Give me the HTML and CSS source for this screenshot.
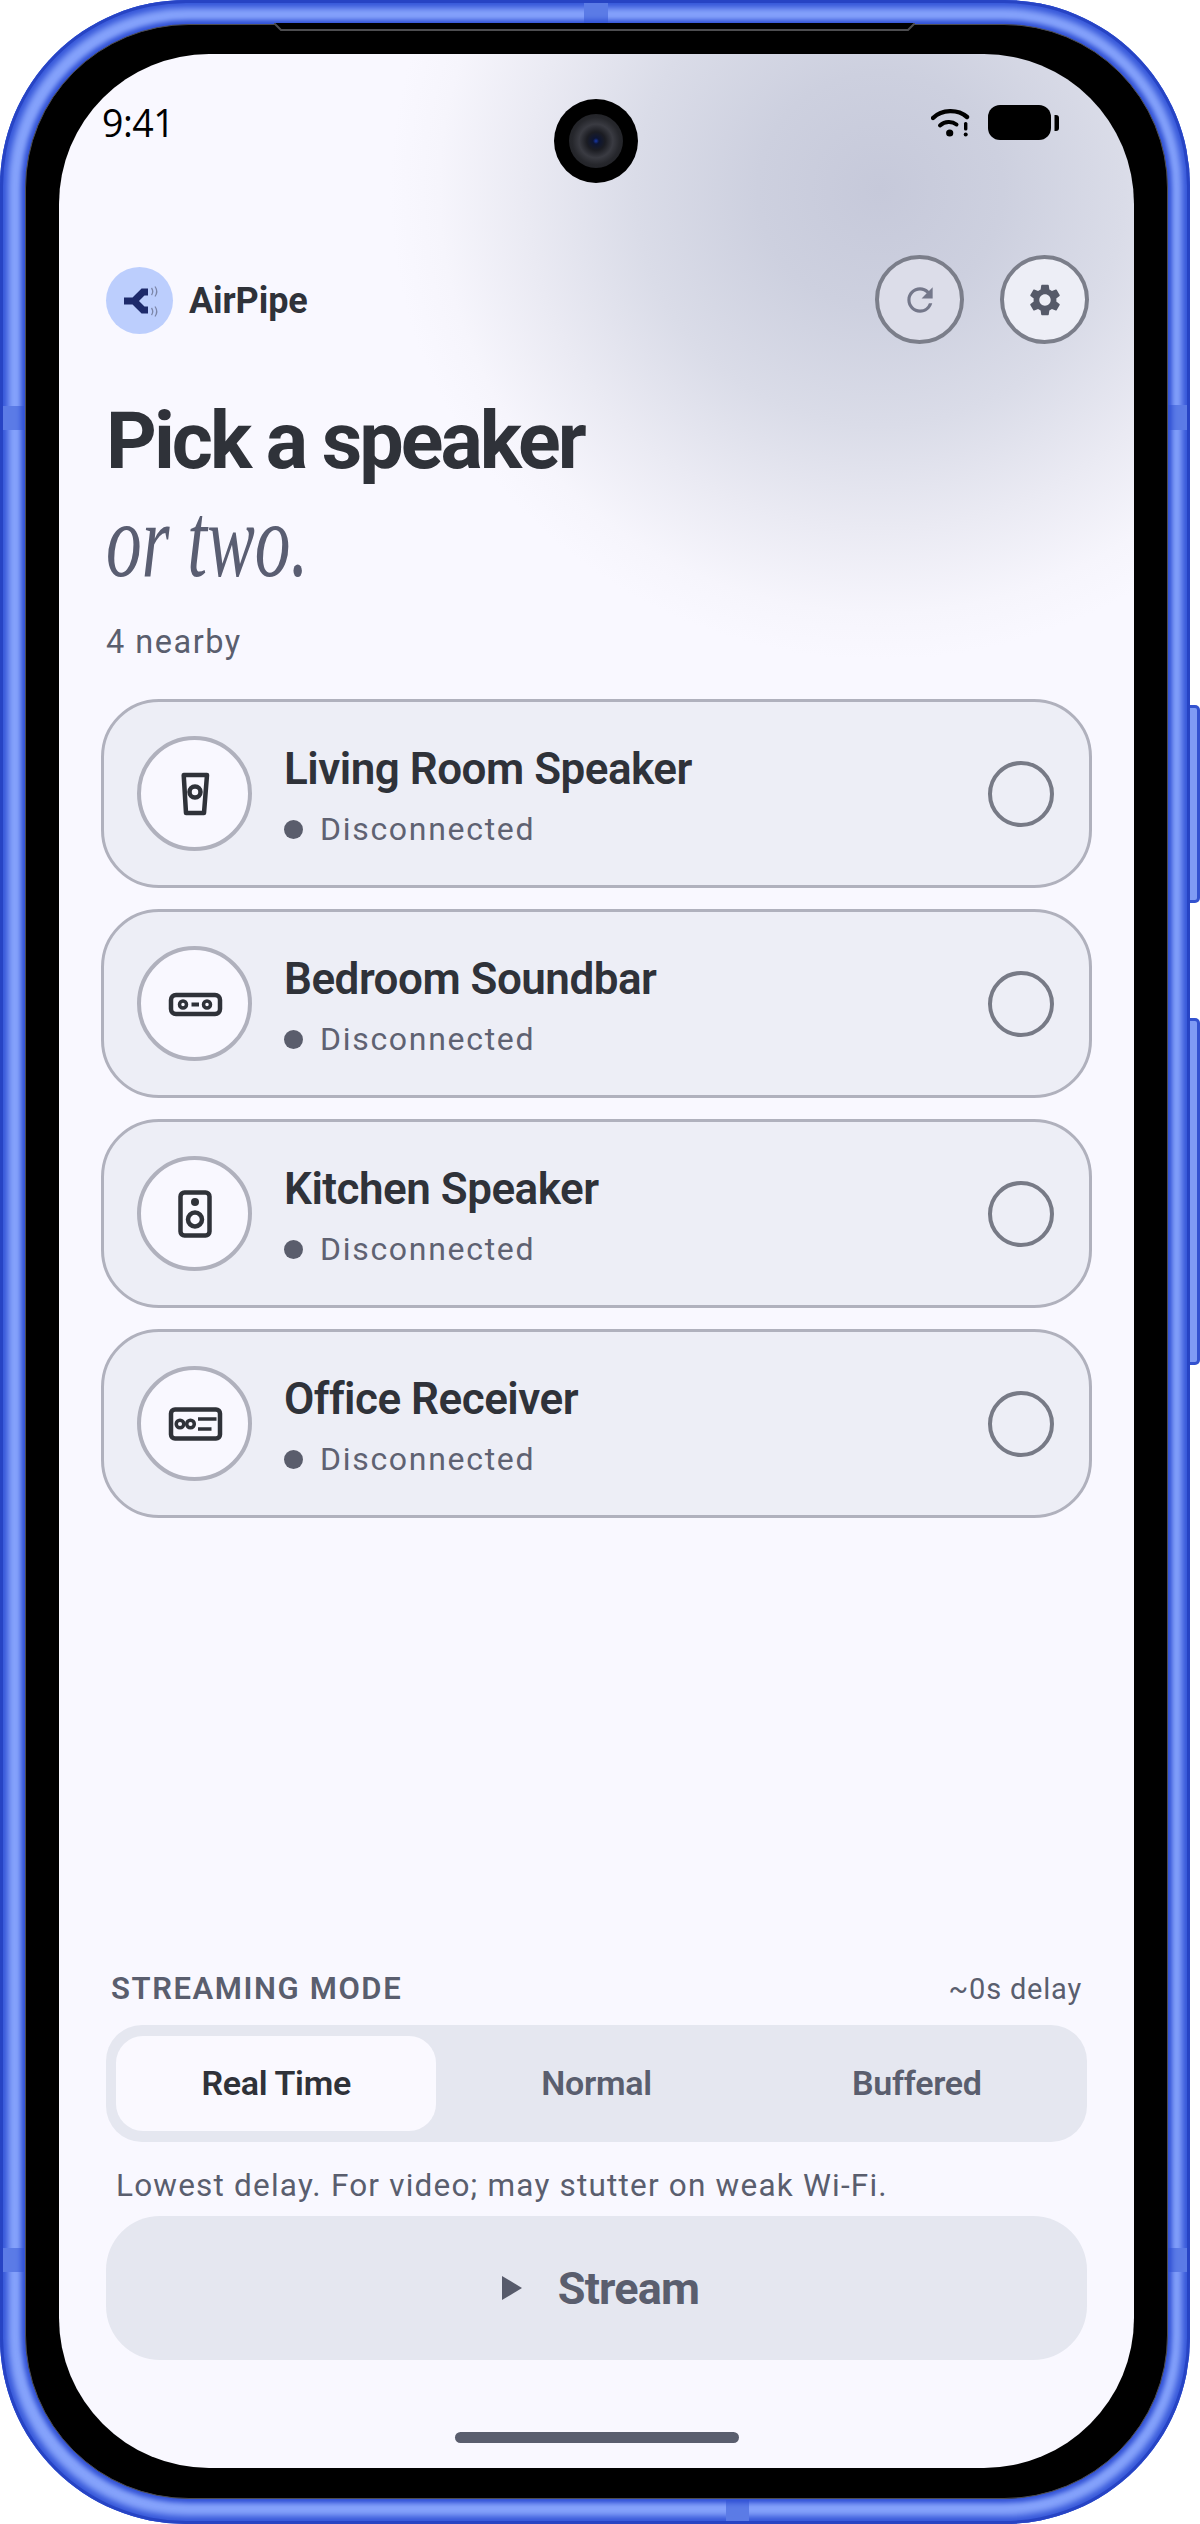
FILE: index.html
```html
<!DOCTYPE html>
<html lang="en">
<head>
<meta charset="utf-8">
<title>AirPipe</title>
<link rel="stylesheet" href="styles.css">
</head>
<body>
<div class="device">
  <span class="side-btn side-btn-a"></span>
  <span class="side-btn side-btn-b"></span>
  <span class="band band-top"></span>
  <span class="band band-bottom"></span>
  <span class="band band-l1"></span>
  <span class="band band-l2"></span>
  <span class="band band-r1"></span>
  <span class="band band-r2"></span>
  <div class="bezel">
    <svg class="notch" width="641" height="10" viewBox="0 0 641 10"><path d="M0 0 L7 7 H634 L641 0 Z" fill="#000"/><path d="M0 0 L7 7 H634 L641 0" fill="none" stroke="#4d4d50" stroke-width="2"/></svg>
    <main class="screen">
      <div class="camera"><span class="lens"></span></div>
      <div class="status">
        <span class="clock">9:41</span>
        <div class="status-icons">
          <svg class="wifi" width="40" height="30" viewBox="0 0 40 30"><path d="M2 10 C11 1 27 1 36 9" fill="none" stroke="#000" stroke-width="4.4" stroke-linecap="round"/><path d="M9 17.5 C14 13 21 13 25.5 16.5" fill="none" stroke="#000" stroke-width="4" stroke-linecap="round"/><circle cx="18.7" cy="25" r="3.6" fill="#000"/><rect x="33" y="14" width="3.4" height="8.5" rx="1.5" fill="#000"/><circle cx="34.7" cy="26.5" r="2" fill="#000"/></svg>
          <svg class="battery" width="71" height="35" viewBox="0 0 71 35"><rect x="0" y="0" width="63" height="35" rx="12" fill="#000"/><path d="M66.5 10 H68 a3 3 0 0 1 3 3 V23 a3 3 0 0 1 -3 3 H66.5 Z" fill="#000"/></svg>
        </div>
      </div>

      <header class="topbar">
        <div class="brand">
          <span class="logo">
            <svg width="67" height="67" viewBox="0 0 67 67">
              <path d="M18 34 H28 L37 25 H42 M28 34 L37 43 H42" fill="none" stroke="#1d2a6b" stroke-width="7"/>
              <path d="M45.5 21 q2.500 3.500 0 7 M49 19.500 q3.500 5 0 10 M45.500 41 q2.500 3.500 0 7 M49 39.500 q3.500 5 0 10" fill="none" stroke="#7c86a8" stroke-width="1.300"/>
            </svg>
          </span>
          <span class="brand-name">AirPipe</span>
        </div>
        <div class="actions">
          <button class="round-btn round-btn-refresh" type="button" aria-label="Refresh">
            <svg width="38" height="38" viewBox="0 0 24 24"><path fill="#74778a" d="M17.650 6.350A7.958 7.958 0 0 0 12 4c-4.420 0-7.990 3.580-7.990 8s3.570 8 7.990 8c3.730 0 6.840-2.550 7.730-6h-2.080A5.990 5.990 0 0 1 12 18c-3.310 0-6-2.690-6-6s2.690-6 6-6c1.660 0 3.140.690 4.220 1.780L13 11h7V4l-2.350 2.350z"/></svg>
          </button>
          <button class="round-btn" type="button" aria-label="Settings">
            <svg width="38" height="38" viewBox="0 0 24 24"><path fill="#565a69" d="M19.140 12.940c.040-.300.060-.610.060-.940 0-.320-.020-.640-.070-.940l2.030-1.580a.490.490 0 0 0 .120-.610l-1.920-3.320a.488.488 0 0 0-.590-.220l-2.390.960c-.500-.380-1.030-.700-1.620-.940l-.360-2.540a.484.484 0 0 0-.480-.410h-3.840c-.240 0-.430.170-.470.410l-.360 2.540c-.590.240-1.130.570-1.620.940l-2.390-.960c-.220-.080-.470 0-.590.220L2.740 8.870c-.120.210-.080.470.120.610l2.030 1.580c-.050.300-.090.630-.090.940s.020.640.070.940l-2.030 1.580a.490.490 0 0 0-.120.610l1.920 3.320c.120.220.370.290.590.220l2.390-.960c.500.380 1.030.700 1.620.940l.360 2.540c.050.240.240.410.480.410h3.840c.240 0 .440-.170.470-.410l.360-2.540c.590-.240 1.130-.560 1.620-.940l2.390.960c.220.080.47 0 .590-.220l1.920-3.320c.120-.220.070-.470-.120-.610l-2.010-1.580zM12 15.600c-1.980 0-3.600-1.620-3.600-3.600s1.620-3.600 3.600-3.600 3.600 1.620 3.600 3.600-1.620 3.600-3.600 3.600z"/></svg>
          </button>
        </div>
      </header>

      <section class="intro">
        <h1 class="title">Pick a speaker</h1>
        <p class="subtitle">or two.</p>
        <p class="count">4 nearby</p>
      </section>

      <section class="list">
        <article class="card">
          <span class="device-icon"><svg width="64" height="64" viewBox="0 0 64 64"><path d="M20.700 13 H44 L41 51 H23 Z" fill="none" stroke="#2f3239" stroke-width="4.500" stroke-linejoin="round"/><circle cx="32" cy="30" r="5.500" fill="none" stroke="#2f3239" stroke-width="4.500"/></svg></span>
          <div class="card-text"><h2 class="card-title">Living Room Speaker</h2><p class="card-status"><span class="dot"></span>Disconnected</p></div>
          <span class="radio"></span>
        </article>
        <article class="card">
          <span class="device-icon"><svg width="64" height="64" viewBox="0 0 64 64"><rect x="8" y="23" width="49" height="19" rx="5" fill="none" stroke="#2f3239" stroke-width="4.500"/><circle cx="20" cy="32.500" r="3.500" fill="none" stroke="#2f3239" stroke-width="3.500"/><circle cx="44" cy="32.500" r="3.500" fill="none" stroke="#2f3239" stroke-width="3.500"/><path d="M28.500 32.500 H36" stroke="#2f3239" stroke-width="4"/></svg></span>
          <div class="card-text"><h2 class="card-title">Bedroom Soundbar</h2><p class="card-status"><span class="dot"></span>Disconnected</p></div>
          <span class="radio"></span>
        </article>
        <article class="card">
          <span class="device-icon"><svg width="64" height="64" viewBox="0 0 64 64"><rect x="17.500" y="10.500" width="29" height="43" rx="4" fill="none" stroke="#2f3239" stroke-width="4.500"/><circle cx="32" cy="20" r="4" fill="#2f3239"/><circle cx="32" cy="37.500" r="7" fill="none" stroke="#2f3239" stroke-width="4.500"/></svg></span>
          <div class="card-text"><h2 class="card-title">Kitchen Speaker</h2><p class="card-status"><span class="dot"></span>Disconnected</p></div>
          <span class="radio"></span>
        </article>
        <article class="card">
          <span class="device-icon"><svg width="64" height="64" viewBox="0 0 64 64"><rect x="8" y="17.500" width="49" height="29" rx="4" fill="none" stroke="#2f3239" stroke-width="4.500"/><circle cx="17" cy="32" r="3.800" fill="none" stroke="#2f3239" stroke-width="3.500"/><circle cx="27.500" cy="32" r="3.800" fill="none" stroke="#2f3239" stroke-width="3.500"/><path d="M35 27 H53.500 M35 37 H48.500" stroke="#2f3239" stroke-width="3.500"/></svg></span>
          <div class="card-text"><h2 class="card-title">Office Receiver</h2><p class="card-status"><span class="dot"></span>Disconnected</p></div>
          <span class="radio"></span>
        </article>
      </section>

      <section class="mode">
        <div class="mode-head"><span class="mode-label">STREAMING MODE</span><span class="mode-delay">~0s delay</span></div>
        <div class="segments">
          <button class="segment segment-on" type="button">Real Time</button>
          <button class="segment" type="button">Normal</button>
          <button class="segment" type="button">Buffered</button>
        </div>
        <p class="mode-desc">Lowest delay. For video; may stutter on weak Wi-Fi.</p>
        <button class="stream" type="button">
          <svg width="20" height="24" viewBox="0 0 20 24"><path d="M0 0 L20 12 L0 24 Z" fill="#575b6b"/></svg>
          <span>Stream</span>
        </button>
      </section>

      <div class="home-wrap"><span class="home-bar"></span></div>
    </main>
  </div>
</div>
</body>
</html>
```

FILE: styles.css
```css
* { box-sizing: border-box; }
html, body { margin: 0; padding: 0; background: #fff; }
body { width: 1200px; height: 2524px; overflow: hidden; font-family: Roboto, "Liberation Sans", sans-serif; color: #2f3239; }
h1, h2, p { margin: 0; font-weight: normal; }
button { font-family: inherit; border: 0; padding: 0; margin: 0; }

.device {
  position: relative;
  width: 1190px;
  height: 2524px;
  padding: 24px 22px 25px 25px;
  border-radius: 186px;
  background: #86a3fb;
  box-shadow: inset 0 0 0 3px #2744c4, inset 0 0 6px 8px #3556d8;
}
.side-btn {
  position: absolute;
  left: 1190px;
  width: 10px;
  background: #7f9bf4;
  border: 3px solid #3352cf;
  border-left: 0;
  border-radius: 0 5px 5px 0;
}
.side-btn-a { top: 705px; height: 198px; }
.side-btn-b { top: 1018px; height: 347px; }

.band { position: absolute; background: #5b7be6; }
.band-top { top: 3px; left: 584px; width: 24px; height: 20px; }
.band-bottom { bottom: 3px; left: 726px; width: 23px; height: 21px; }
.band-l1 { left: 3px; top: 406px; width: 21px; height: 24px; }
.band-l2 { left: 3px; top: 2248px; width: 21px; height: 24px; }
.band-r1 { right: 3px; top: 405px; width: 19px; height: 25px; }
.band-r2 { right: 3px; top: 2248px; width: 19px; height: 24px; }

.bezel {
  position: relative;
  width: 1143px;
  height: 2475px;
  padding: 29px 33px 30px 33px;
  background: #000;
  border: 1.500px solid #4d4d50;
  border-radius: 164px;
  box-shadow: 0 0 5px 4px #2f4fd4;
}
.notch { position: absolute; top: -2px; left: 248px; }

.screen {
  position: relative;
  display: flex;
  flex-direction: column;
  height: 100%;
  padding: 0 42px 25px;
  border-radius: 150px;
  overflow: hidden;
  background:
    radial-gradient(ellipse 490px 470px at 821px 136px,
      #c6c9da 0%, #cdd0df 25%, #dadce8 50%, #eaeaf3 72%, #f6f5fc 90%, #f9f8ff 100%),
    #f9f8ff;
}

.camera {
  position: absolute;
  top: 45px;
  left: 495px;
  width: 84px;
  height: 84px;
  border-radius: 50%;
  background: #000;
  display: flex;
  align-items: center;
  justify-content: center;
}
.lens {
  width: 54px;
  height: 54px;
  border-radius: 50%;
  background: radial-gradient(circle at 50% 50%, #1737a8 0, #0d1533 8%, #1b1c22 24%, #3a3b42 44%, #26272c 62%, #1a1b1f 100%);
}

.status { display: flex; justify-content: space-between; align-items: center; height: 138px; padding: 0 1px; }
.clock { font-family: "Open Sans", sans-serif; font-size: 37.500px; color: #000; line-height: 40px; letter-spacing: -0.500px; margin-top: -1px; }
.status-icons { display: flex; align-items: center; gap: 17px; margin-right: 32px; margin-top: -1px; }
.wifi, .battery { display: block; }

.topbar { display: flex; justify-content: space-between; align-items: center; height: 89px; margin-top: 63px; padding: 0 3px 0 5px; }
.brand { display: flex; align-items: center; gap: 16px; margin-top: 2px; }
.logo { display: block; width: 67px; height: 67px; border-radius: 50%; background: #bccefd; }
.logo svg { display: block; }
.brand-name { font-size: 36px; font-weight: 700; letter-spacing: -0.100px; line-height: 44px; }
.actions { display: flex; gap: 36px; }
.round-btn {
  display: flex;
  align-items: center;
  justify-content: center;
  width: 89px;
  height: 89px;
  border-radius: 50%;
  border: 4.500px solid #7b7e8a;
  background: #edeef6;
}
.round-btn-refresh { background: #dcdde9; }

.intro { padding-left: 5px; }
.title { margin-top: 53px; font-size: 79px; font-weight: 700; line-height: 88px; letter-spacing: -3px; color: #2f3239; }
.subtitle {
  margin-top: 6px;
  font-family: "Liberation Serif", serif;
  font-style: italic;
  font-size: 105px;
  line-height: 100px;
  color: #5a5e72;
  transform: scaleX(0.68);
  transform-origin: left center;
}
.count { margin-top: 31px; font-size: 32.500px; line-height: 40px; letter-spacing: 1.500px; color: #5a5e6e; }

.list { display: flex; flex-direction: column; gap: 21px; margin-top: 37px; }
.card {
  display: flex;
  align-items: center;
  height: 189px;
  padding: 0 35px 0 33px;
  border: 3.500px solid #b0b1bd;
  border-radius: 58px;
  background: #edeef6;
}
.device-icon {
  display: flex;
  align-items: center;
  justify-content: center;
  flex: none;
  width: 115px;
  height: 115px;
  border-radius: 50%;
  border: 4px solid #b0b1bd;
  background: #f9f8ff;
}
.card-text { flex: 1; margin-left: 32px; margin-top: 5px; }
.card-title { font-size: 44px; font-weight: 600; line-height: 56px; letter-spacing: -0.500px; color: #2f3239; }
.card-status { display: flex; align-items: center; gap: 17px; margin-top: 10px; font-size: 32px; line-height: 44px; letter-spacing: 1.700px; color: #5f6272; }
.dot { display: block; flex: none; width: 19px; height: 19px; border-radius: 50%; background: #5a5d6c; }
.radio { flex: none; width: 66px; height: 66px; border-radius: 50%; border: 4px solid #777a86; }

.mode { margin-top: auto; display: flex; flex-direction: column; }
.mode-head { display: flex; justify-content: space-between; align-items: baseline; padding: 0 10px 0 10px; height: 40px; }
.mode-label { font-size: 31px; font-weight: 600; letter-spacing: 1.600px; line-height: 40px; color: #5a5e6e; }
.mode-delay { font-size: 29px; letter-spacing: 0.800px; line-height: 40px; color: #5a5e6e; }
.segments { display: grid; grid-template-columns: repeat(3, 1fr); margin: 16px 5px 0; padding: 11px 10px; height: 117px; border-radius: 36px; background: #e5e7f0; }
.segment { border-radius: 27px; background: transparent; font-size: 34px; font-weight: 600; letter-spacing: -0.300px; color: #5a5e6e; padding-bottom: 2px; }
.segment-on { background: #faf9ff; color: #2f3239; }
.mode-desc { margin: 24px 0 0 15px; font-size: 31.500px; line-height: 40px; letter-spacing: 1.200px; color: #5a5e6e; }
.stream {
  display: flex;
  align-items: center;
  justify-content: center;
  gap: 36px;
  margin: 10px 5px 0;
  padding-left: 8px;
  height: 144px;
  border-radius: 54px;
  background: #e5e7f0;
  font-size: 45px;
  font-weight: 700;
  letter-spacing: -0.800px;
  color: #5a5e6e;
}
.home-wrap { display: flex; justify-content: center; margin-top: 72px; }
.home-bar { display: block; width: 284px; height: 11px; border-radius: 6px; background: #5a5e6e; }
```
